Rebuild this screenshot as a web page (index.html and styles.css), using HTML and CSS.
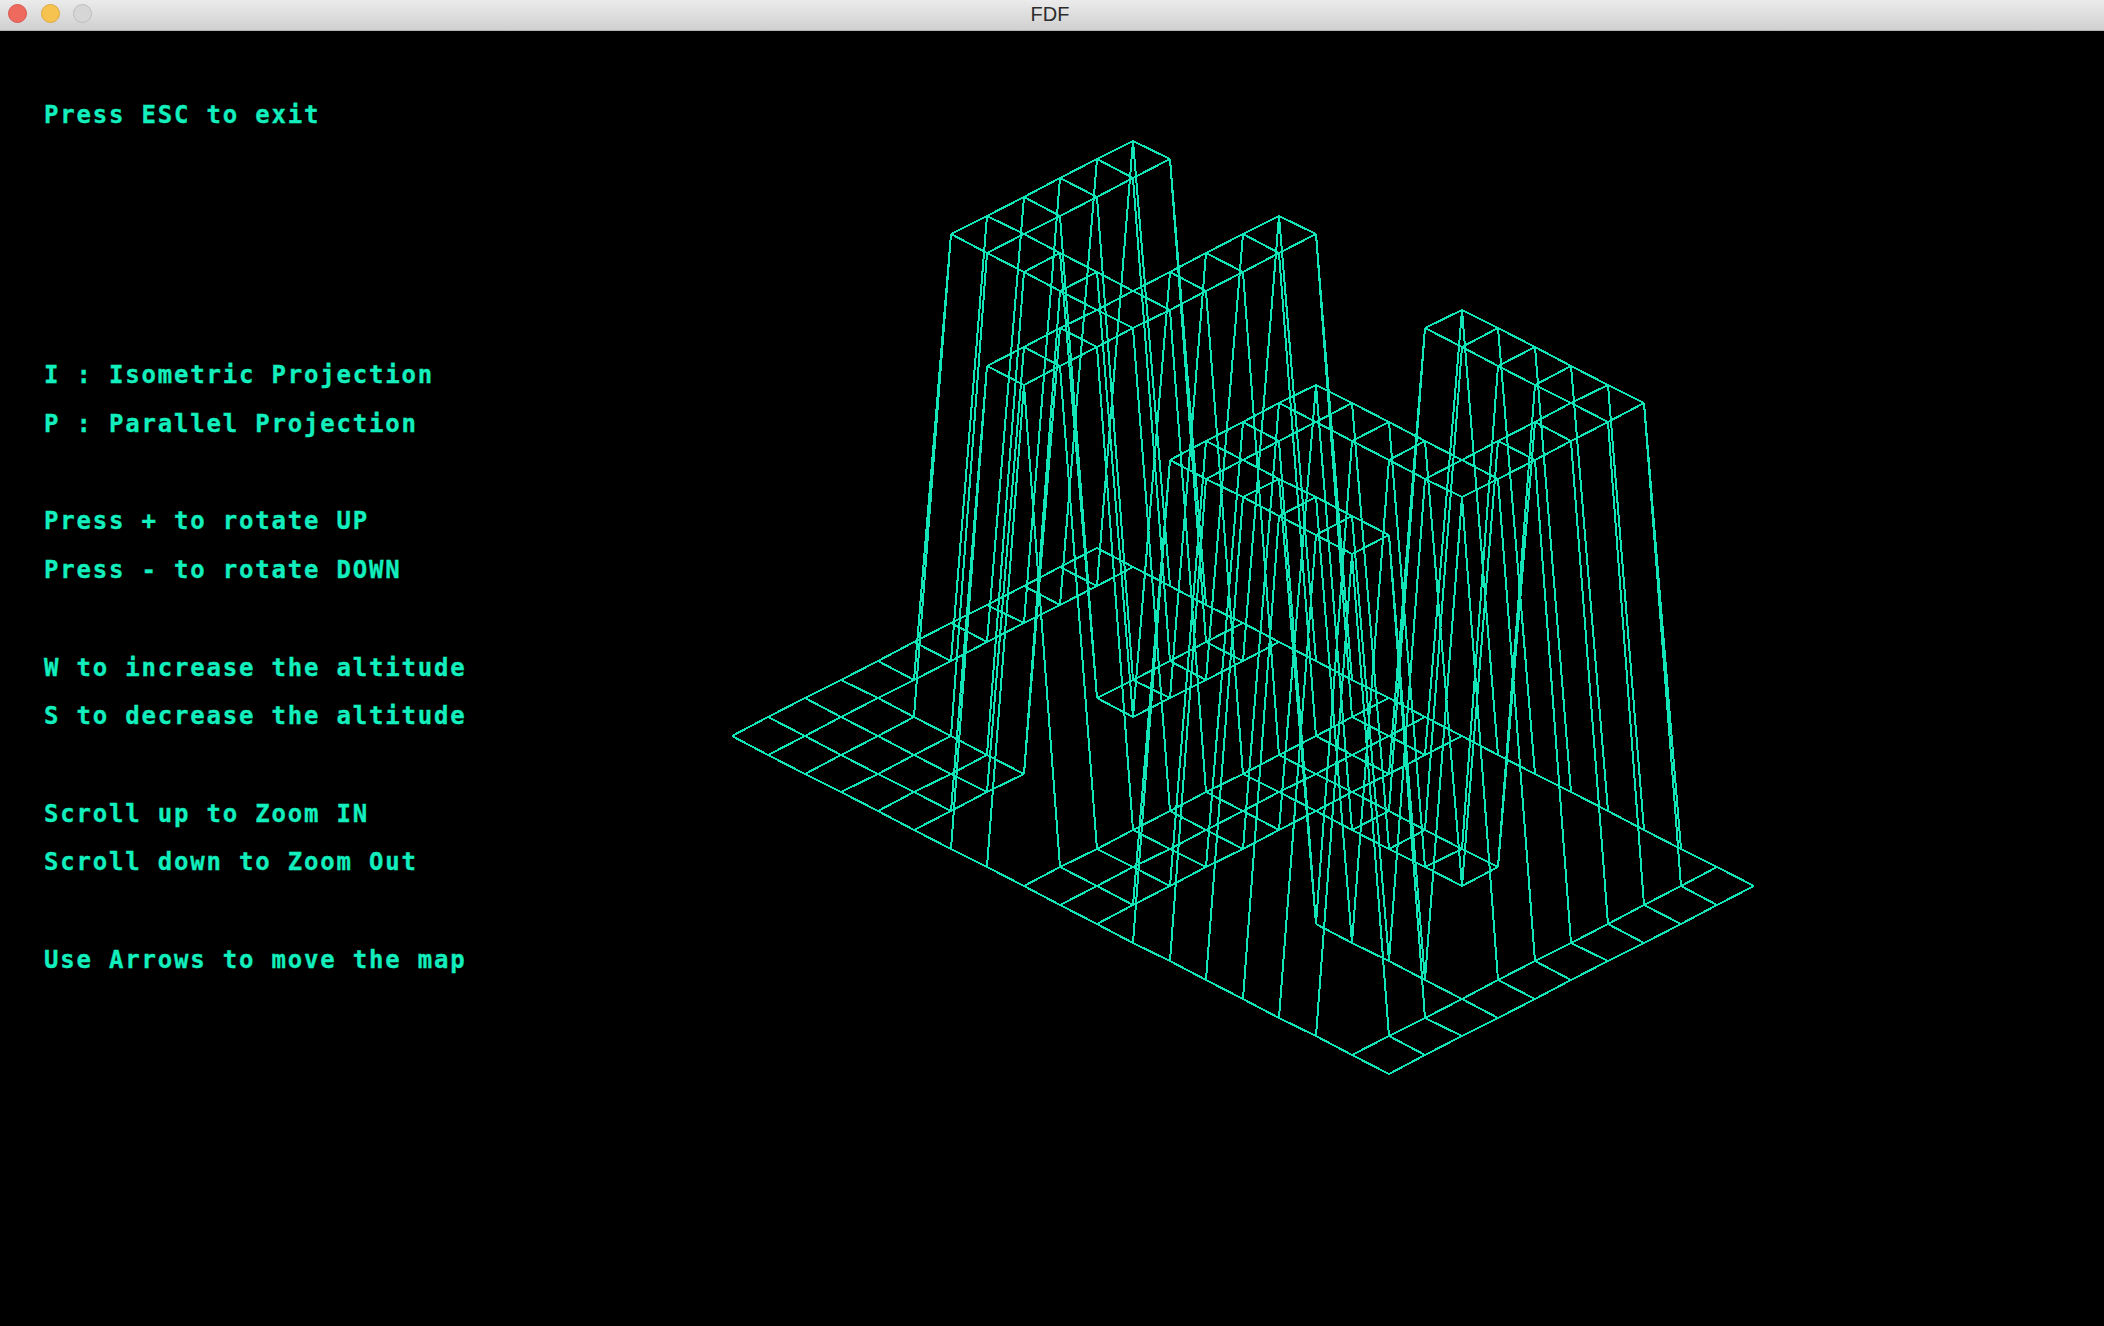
FILE: index.html
```html
<!DOCTYPE html>
<html lang="en">
<head>
<meta charset="utf-8">
<title>FDF</title>
<link rel="stylesheet" href="styles.css">
</head>
<body>
<div class="window">
  <header class="titlebar">
    <div class="lights">
      <span class="light light-close"></span>
      <span class="light light-min"></span>
      <span class="light light-zoom"></span>
    </div>
    <span class="title">FDF</span>
  </header>
  <main class="stage">
    <aside class="help">
      <p class="line first">Press ESC to exit</p>
      <div class="group">
        <p class="line">I : Isometric Projection</p>
        <p class="line">P : Parallel Projection</p>
      </div>
      <div class="group">
        <p class="line">Press + to rotate UP</p>
        <p class="line">Press - to rotate DOWN</p>
      </div>
      <div class="group">
        <p class="line">W to increase the altitude</p>
        <p class="line">S to decrease the altitude</p>
      </div>
      <div class="group">
        <p class="line">Scroll up to Zoom IN</p>
        <p class="line">Scroll down to Zoom Out</p>
      </div>
      <div class="group">
        <p class="line">Use Arrows to move the map</p>
      </div>
    </aside>
    <svg class="map" viewBox="700 31 1404 1295" aria-label="Wireframe map">
      <path id="wire" class="wire" d=""></path>
    </svg>
  </main>
</div>
<script src="map.js"></script>
</body>
</html>
```

FILE: styles.css
```css
html, body {
  margin: 0;
  height: 100%;
  background: #000;
  overflow: hidden;
}

.window {
  display: flex;
  flex-direction: column;
  height: 1326px;
  width: 2104px;
}

.titlebar {
  position: relative;
  flex: none;
  height: 30px;
  display: flex;
  align-items: center;
  justify-content: center;
  background: linear-gradient(#ebebeb, #d0d0d0);
  border-bottom: 1px solid #b4b4b4;
}

.lights {
  position: absolute;
  left: 8px;
  top: 4px;
  display: flex;
  gap: 13.5px;
}

.light {
  width: 17px;
  height: 17px;
  border-radius: 50%;
  border: 1px solid;
}

.light-close { background: #ee6a5f; border-color: #d9574d; }
.light-min { background: #f6c351; border-color: #dfa83c; }
.light-zoom { background: #d6d6d6; border-color: #bdbdbd; }

.title {
  font: 20px/1 "Liberation Sans", Arial, sans-serif;
  color: #2c2c2c;
  margin: -3px 4px 0 0;
}

.stage {
  flex: 1;
  display: flex;
  min-height: 0;
}

.help {
  flex: none;
  width: 656px;
  padding: 60px 0 0 44px;
  font: bold 24px/48.7px "DejaVu Sans Mono", monospace;
  letter-spacing: 1.8px;
  color: #12eebd;
  -webkit-text-stroke: 0.3px #12eebd;
}

.line {
  margin: 0;
  white-space: pre;
}

.first {
  margin-bottom: 211.7px;
}

.group {
  margin-bottom: 48.7px;
}

.map {
  flex: none;
  width: 1404px;
  height: 1295px;
  display: block;
}

.wire {
  fill: none;
  stroke: #12e6b8;
  stroke-width: 2;
  shape-rendering: crispEdges;
}
```

FILE: map.js
```js
// Height map: row index counts up from the lower-left edge of the plate.
var FILLED = {
  9: [2, 3, 6, 7, 11, 12, 13, 14, 15, 16],
  8: [2, 3, 6, 7, 11, 12, 13, 14, 15, 16],
  7: [2, 3, 6, 7, 15, 16],
  6: [2, 3, 6, 7, 15, 16],
  5: [2, 3, 4, 5, 6, 7, 11, 12, 13, 14, 15, 16],
  4: [2, 3, 4, 5, 6, 7, 11, 12, 13, 14, 15, 16],
  3: [6, 7, 11, 12],
  2: [6, 7, 11, 12, 13, 14, 15, 16],
  1: [6, 7, 11, 12, 13, 14, 15, 16]
};
var COLS = 19, ROWS = 11;
var OX = 731.5, OY = 736, DX = 36.5, DY = 18.78, H = 464;

function point(c, r) {
  var up = (FILLED[r] || []).indexOf(c) >= 0 ? H : 0;
  var x = OX + DX * (c + r);
  var y = OY + DY * (c - r) - up;
  return Math.round(x) + " " + Math.round(y);
}

var d = [];
for (var r = 0; r < ROWS; r++) {
  for (var c = 0; c < COLS; c++) {
    if (c + 1 < COLS) d.push("M" + point(c, r) + "L" + point(c + 1, r));
    if (r + 1 < ROWS) d.push("M" + point(c, r) + "L" + point(c, r + 1));
  }
}
document.getElementById("wire").setAttribute("d", d.join(""));
```
